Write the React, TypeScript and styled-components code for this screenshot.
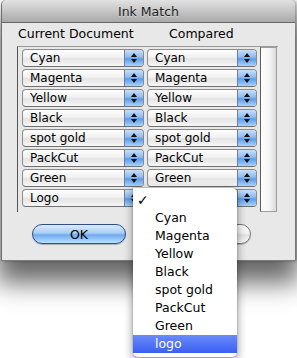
import styled, { createGlobalStyle } from "styled-components";

const GlobalStyle = createGlobalStyle`
  html, body {
    margin: 0;
    padding: 0;
    background: #ffffff;
  }
  body {
    font-family: "DejaVu Sans", "Liberation Sans", sans-serif;
    color: #000;
  }
`;

const Page = styled.div`
  position: relative;
  width: 297px;
  height: 358px;
  overflow: hidden;
`;

const Window = styled.div`
  margin-left: 1px;
  width: 293px;
  border-radius: 5px 5px 0 0;
  border-left: 1px solid #6e6e6e;
  box-shadow: 0 18px 26px 4px rgba(0, 0, 0, 0.6), 2px 0 3px rgba(0, 0, 0, 0.3);
  background: #e8e8e8;
`;

const TitleBar = styled.div`
  height: 22px;
  border-bottom: 1px solid #676767;
  border-radius: 5px 5px 0 0;
  background: linear-gradient(#e2e2e2, #c6c6c6 50%, #a9a9a9);
  display: flex;
  align-items: center;
  justify-content: center;
  font-size: 12.5px;
  color: #1c1c1c;
  text-shadow: 0 1px 0 rgba(255, 255, 255, 0.45);
`;

const Body = styled.div`
  height: 238px;
  padding: 3px 0 0 15px;
  box-sizing: border-box;
  border-bottom: 1px solid #7c7c7c;
`;

const Headers = styled.div`
  display: flex;
  font-size: 12.5px;
  line-height: 15px;
  height: 20px;
`;

const Header = styled.div<{ $w: number }>`
  width: ${(p) => p.$w}px;
  padding-left: 1px;
`;

const ListBox = styled.div`
  display: flex;
  width: 261px;
  height: 166px;
  border-left: 1px solid #555;
  border-top: 1px solid #9a9a9a;
  box-sizing: border-box;
`;

const Rows = styled.div`
  display: flex;
  flex-direction: column;
  gap: 2px;
  padding: 2px 3px 0 4px;
`;

const Row = styled.div`
  display: flex;
  gap: 3px;
`;

const Popup = styled.div<{ $w: number }>`
  position: relative;
  width: ${(p) => p.$w}px;
  height: 18px;
  box-sizing: border-box;
  display: flex;
  border: 1px solid #8b8b8b;
  border-bottom-color: #6f6f6f;
  border-radius: 4px;
  overflow: hidden;
  background: linear-gradient(#ffffff, #f1f1f1 45%, #e4e4e4 55%, #f6f6f6);
`;

const PopupLabel = styled.div`
  flex: 1;
  font-size: 12px;
  line-height: 16px;
  padding-left: 7px;
  white-space: nowrap;
`;

const Stepper = styled.div`
  width: 18px;
  border-left: 1px solid #6a7fa3;
  background: linear-gradient(#c9def8, #8fbaf0 45%, #5f9be9 55%, #a8d3fb);
  display: flex;
  flex-direction: column;
  align-items: center;
  justify-content: center;
  gap: 2px;
`;

const Arrow = styled.div<{ $down?: boolean }>`
  width: 0;
  height: 0;
  border-left: 3px solid transparent;
  border-right: 3px solid transparent;
  ${(p) =>
    p.$down ? "border-top: 4px solid #111;" : "border-bottom: 4px solid #111;"}
`;

const Scroller = styled.div`
  width: 17px;
  height: 165px;
  box-sizing: border-box;
  border: 1px solid #9c9c9c;
  border-left-color: #5c5c5c;
  background: linear-gradient(90deg, #ffffff, #f3f3f3 60%, #d8d8d8);
`;

const Buttons = styled.div`
  display: flex;
  gap: 31px;
  padding: 12px 0 0 15px;
`;

const PushButton = styled.div<{ $default?: boolean }>`
  width: 94px;
  height: 20px;
  box-sizing: border-box;
  border-radius: 10px;
  display: flex;
  align-items: center;
  justify-content: center;
  font-size: 12.5px;
  border: 1px solid ${(p) => (p.$default ? "#2f4f86" : "#7a7a7a")};
  background: ${(p) =>
    p.$default
      ? "linear-gradient(#d9ebfd, #a9cdf6 45%, #6eaaf0 55%, #b9e0ff)"
      : "linear-gradient(#ffffff, #f4f4f4 45%, #e2e2e2 55%, #fbfbfb)"};
  box-shadow: 0 1px 1px rgba(0, 0, 0, 0.25);
`;

const Menu = styled.div`
  position: absolute;
  left: 133px;
  top: 188px;
  width: 104px;
  padding: 3px 0 4px;
  box-sizing: border-box;
  background: #ffffff;
  border-radius: 0 5px 5px 5px;
  box-shadow: 0 3px 10px rgba(0, 0, 0, 0.45), 0 0 0 1px rgba(0, 0, 0, 0.08);
`;

const MenuItem = styled.div<{ $active?: boolean }>`
  position: relative;
  height: 18px;
  line-height: 18px;
  padding-left: 22px;
  font-size: 12.5px;
  color: ${(p) => (p.$active ? "#fff" : "#000")};
  background: ${(p) => (p.$active ? "linear-gradient(#6a8bfa, #3a5ff3)" : "transparent")};
`;

const Check = styled.span`
  position: absolute;
  left: 4px;
  top: 0;
  font-size: 14px;
  font-weight: bold;
`;

const inks = ["Cyan", "Magenta", "Yellow", "Black", "spot gold", "PackCut", "Green", "Logo"];
const compared = ["Cyan", "Magenta", "Yellow", "Black", "spot gold", "PackCut", "Green", ""];
const menuItems = ["Cyan", "Magenta", "Yellow", "Black", "spot gold", "PackCut", "Green", "logo"];

function PopupButton({ label, width }: { label: string; width: number }) {
  return (
    <Popup $w={width}>
      <PopupLabel>{label}</PopupLabel>
      <Stepper>
        <Arrow />
        <Arrow $down />
      </Stepper>
    </Popup>
  );
}

export default function App() {
  return (
    <Page>
      <GlobalStyle />
      <Window>
        <TitleBar>Ink Match</TitleBar>
        <Body>
          <Headers>
            <Header $w={150}>Current Document</Header>
            <Header $w={100}>Compared</Header>
          </Headers>
          <ListBox>
            <Rows>
              {inks.map((ink, i) => (
                <Row key={ink}>
                  <PopupButton label={ink} width={122} />
                  <PopupButton label={compared[i]} width={110} />
                </Row>
              ))}
            </Rows>
            <Scroller />
          </ListBox>
          <Buttons>
            <PushButton $default>OK</PushButton>
            <PushButton />
          </Buttons>
        </Body>
      </Window>
      <Menu>
        <MenuItem>
          <Check>✓</Check>
        </MenuItem>
        {menuItems.map((m) => (
          <MenuItem key={m} $active={m === "logo"}>
            {m}
          </MenuItem>
        ))}
      </Menu>
    </Page>
  );
}
